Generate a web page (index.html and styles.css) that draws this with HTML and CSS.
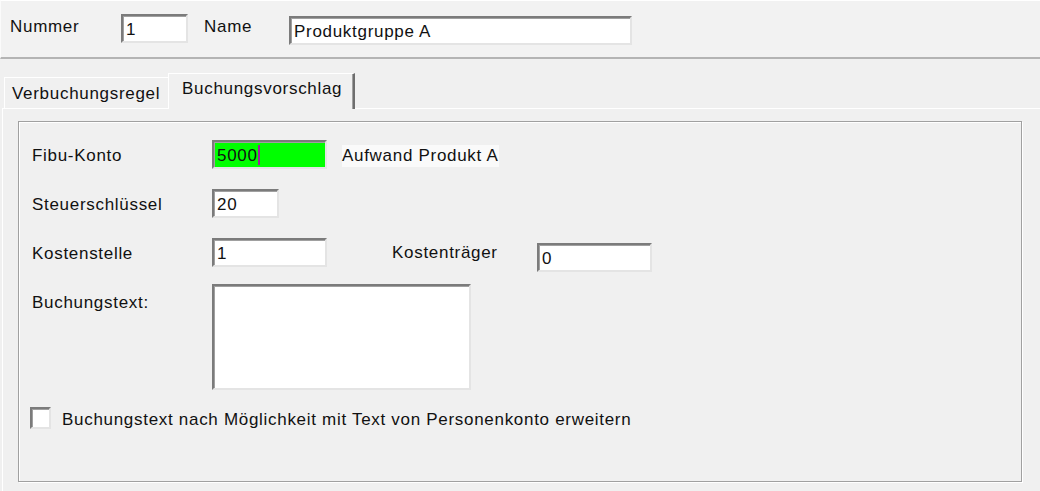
FILE: index.html
```html
<!DOCTYPE html>
<html lang="de">
<head>
  <meta charset="UTF-8">
  <title>Produktgruppe</title>
  <link rel="stylesheet" href="styles.css">
</head>
<body>
  <div class="header">
    <span class="lbl lbl-nummer">Nummer</span>
    <div class="field f-nummer">1</div>
    <span class="lbl lbl-name">Name</span>
    <div class="field f-name">Produktgruppe A</div>
  </div>

  <div class="tabs">
    <div class="tab">Verbuchungsregel</div>
    <div class="tab active">Buchungsvorschlag</div>
  </div>

  <div class="panel">
    <div class="group">
      <div class="row">
        <span class="lbl col">Fibu-Konto</span>
        <div class="field f-konto green">5000<span class="caret"></span></div>
        <span class="lbl desc">Aufwand Produkt A</span>
      </div>
      <div class="row">
        <span class="lbl col">Steuerschlüssel</span>
        <div class="field f-steuer">20</div>
      </div>
      <div class="row">
        <span class="lbl col">Kostenstelle</span>
        <div class="field f-kst">1</div>
        <span class="lbl lbl-ktr">Kostenträger</span>
        <div class="field f-ktr">0</div>
      </div>
      <div class="row top">
        <span class="lbl col text-lbl">Buchungstext:</span>
        <div class="field memo"></div>
      </div>
      <div class="row check-row">
        <span class="checkbox"></span>
        <span class="lbl check-lbl">Buchungstext nach Möglichkeit mit Text von Personenkonto erweitern</span>
      </div>
    </div>
  </div>
</body>
</html>
```

FILE: styles.css
```css
body {
  margin: 0;
  width: 1040px;
  height: 491px;
  overflow: hidden;
  background: #f0f0f0;
  font-family: "Liberation Sans", Arial, sans-serif;
  font-size: 17px;
  letter-spacing: 0.7px;
  color: #111;
}

.lbl {
  white-space: nowrap;
}

/* sunken edit box */
.field {
  box-sizing: border-box;
  height: 29px;
  background: #fff;
  border: 2px solid;
  border-color: #7b7b7b #e4e4e4 #e4e4e4 #7b7b7b;
  box-shadow: inset 1px 1px 0 #a0a0a0;
  padding: 3px 3px 0 3px;
  line-height: 21px;
  white-space: nowrap;
}

/* header */
.header {
  box-sizing: border-box;
  height: 59px;
  border-top: 1px solid #fff;
  border-left: 1px solid #fbfbfb;
  border-bottom: 2px solid #b4b4b4;
  background: #f2f2f2;
  display: flex;
  align-items: center;
  padding-left: 9px;
}
.lbl-nummer { width: 111px; margin-top: -4px; }
.f-nummer { width: 67px; margin-top: -1px; }
.lbl-name { margin-left: 16px; width: 85px; margin-top: -4px; }
.f-name { width: 343px; margin-top: 2px; }

/* tabs */
.tabs {
  display: flex;
  align-items: flex-end;
  padding-left: 4px;
  margin-top: 14px;
  position: relative;
  z-index: 1;
}
.tab {
  box-sizing: border-box;
  height: 31px;
  width: 164px;
  border-top: 1px solid #fff;
  border-left: 1px solid #fff;
  padding: 6px 0 0 7px;
}
.tab.active {
  height: 36px;
  width: 187px;
  margin-bottom: -1px;
  background: #f0f0f0;
  border-right: 2px solid #6e6e6e;
  box-shadow: inset -1px 0 0 #a0a0a0;
  padding: 5px 0 0 13px;
}

/* tab page */
.panel {
  box-sizing: border-box;
  margin-left: 2px;
  border-top: 1px solid #fff;
  border-left: 1px solid #fff;
  height: 400px;
  padding: 12px 0 0 15px;
}
.group {
  box-sizing: border-box;
  width: 1004px;
  height: 361px;
  border: 1px solid #a0a0a0;
  box-shadow: inset 1px 1px 0 #fff, 1px 1px 0 #fff;
  padding: 18px 0 0 13px;
  display: flex;
  flex-direction: column;
  gap: 20px;
}

.row {
  display: flex;
  align-items: center;
  height: 29px;
}
.row.top { align-items: flex-start; height: auto; margin-top: -3px; }
.col { width: 180px; padding-top: 2px; }
.text-lbl { padding-top: 9px; }

.f-konto, .f-kst { width: 115px; }
.f-steuer { width: 67px; }
.green { background: #00ff00; }
.caret {
  display: inline-block;
  width: 2px;
  height: 20px;
  vertical-align: -4px;
  background: #a020a0;
}
.desc {
  margin-left: 15px;
  background: #fafafa;
  padding: 1px 0;
  margin-top: 2px;
}
.lbl-ktr { margin-left: 65px; width: 145px; }
.f-ktr { width: 115px; margin-top: 9px; }
.memo { width: 259px; height: 106px; }

.check-row { gap: 11px; margin-left: -2px; height: 22px; margin-top: -3px; }
.check-lbl { padding-top: 3px; }
.checkbox {
  box-sizing: border-box;
  width: 21px;
  height: 22px;
  background: #fff;
  border: 2px solid;
  border-color: #7b7b7b #e4e4e4 #e4e4e4 #7b7b7b;
  box-shadow: inset 1px 1px 0 #a0a0a0;
}
```
